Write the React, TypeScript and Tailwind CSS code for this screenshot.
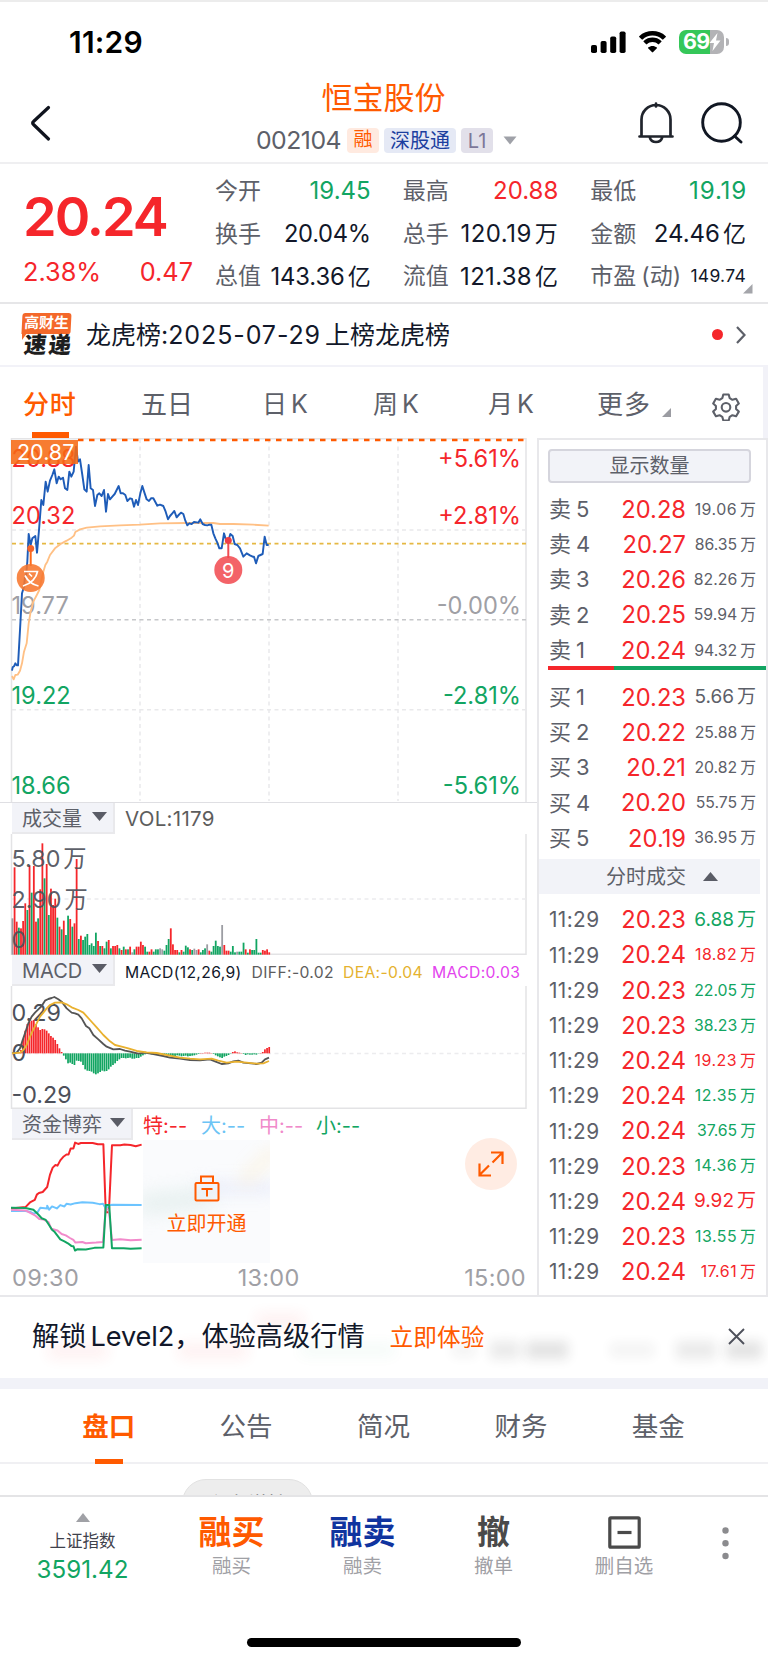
import type { ReactNode } from "react";

type Tone = "r" | "g" | "n";
const barFill: Record<Tone, string> = { r: "#f5262b", g: "#12a562", n: "#9c9da3" };

/* Minute bars: tone followed by the y of the bar's top */
const volume =
  "n385 r232 r395 g413 r415 r393 r340 g360 r226 g308 r228 r395 g385 r298 r160 g265 r222 g375 r296 r345 r326 g383 r410 g418 r392 g435 g377 r387 g410 r400 r207 g447 r437 g450 g440 g432 g465 g460 g468 g428 r453 g468 r468 g475 g455 r450 g475 r468 r468 r465 g475 r480 g470 r478 g478 r470 n487 g478 r470 r470 r455 r465 g470 g485 r485 r478 g485 g478 g478 n475 n478 g482 g465 g447 r415 r463 r480 r480 g487 r480 g485 g467 g472 r478 g480 n476 n480 r478 g487 g480 g475 n463 r482 g485 g468 g452 g468 g470 n405 r465 r482 r482 g485 g468 g487 n485 g485 g485 g458 r478 g488 r478 g480 g480 g447 g488 g488 r480 r482 r478 r487".split(" ");

const macdBars = [
  790, 789, 788, 786, 780, 747, 722, 702, 696, 692, 690, 702, 712, 720, 717, 718, 722, 730, 738, 743, 750, 762, 775, 786,
  797, 808, 820, 818, 822, 825, 812, 813, 815, 825, 838, 842, 843, 845, 850, 853, 850, 846, 842, 844, 843, 838, 830, 825,
  820, 813, 808, 804, 804, 805, 804, 803, 806, 806, 804, 804, 800, 796, 793, 792, 792, 793, 794, 793, 792, 792, 793, 793,
  795, 797, 799, 802, 799, 796, 797, 799, 798, 797, 799, 798, 797, 796, 794, 792, 789, 789, 788, 788, 788, 789, 792, 796,
  799, 802, 804, 800, 798, 795, 791, 786, 784, 787, 788, 789, 792, 795, 793, 794, 794, 793, 794, 791, 789, 786, 778, 774, 771,
];

const priceLine =
  "36,722 38,712 42,709 46,700 50,706 54,706 60,600 66,490 72,470 75,440 78,440 82,395 86,312 92,345 97,325 106,318 111,368 117,300 124,210 130,225 137,155 143,185 150,152 157,135 163,118 170,160 176,140 182,148 189,143 195,175 202,180 208,125 214,140 221,125 228,50 234,95 240,88 247,135 253,178 260,185 266,105 272,175 279,180 285,228 292,195 298,190 305,198 312,180 318,245 324,192 330,208 337,200 344,192 350,180 356,168 362,190 369,190 376,195 382,213 390,205 396,207 402,230 408,210 414,225 421,190 427,168 434,190 440,208 447,213 453,205 460,205 472,227 480,224 490,228 497,245 504,268 510,258 517,250 523,243 530,262 536,255 543,248 550,252 556,272 562,286 568,280 575,282 582,276 595,278 601,268 608,282 615,285 622,286 628,284 634,284 640,310 646,325 652,338 658,355 665,355 672,310 678,330 684,335 691,312 698,318 704,342 712,345 720,355 730,380 740,370 750,376 758,380 762,380 768,400 775,378 788,372 794,320 800,345 806,345";
const averageLine =
  "36,738 41,748 46,735 53,734 60,722 66,700 72,665 80,640 86,580 92,545 100,515 112,492 118,480 124,450 130,425 136,405 142,395 150,375 165,355 185,340 200,332 215,323 222,317 226,306 240,298 260,293 300,289 360,286 420,284 480,280 560,279 640,279 660,282 700,282 760,284 806,287";
const diffLine =
  "36,790 50,788 60,775 68,750 75,730 85,700 95,680 105,668 115,658 125,648 135,632 145,627 155,624 163,621 175,628 185,635 200,655 215,668 225,670 235,674 245,685 258,708 268,715 280,735 295,748 310,762 320,770 340,778 360,777 375,782 390,785 415,791 435,788 460,792 490,798 510,803 540,806 570,810 600,811 630,808 645,814 665,822 685,820 700,814 715,812 730,818 770,822 785,818 795,808 807,803";
const deaLine =
  "36,790 60,788 70,780 80,765 90,740 100,718 110,700 120,680 130,668 140,655 150,645 165,638 185,637 200,643 215,652 235,660 250,668 270,690 290,712 310,735 330,754 345,765 365,770 385,775 410,783 440,787 470,789 500,795 540,803 570,806 600,808 635,806 655,812 680,818 710,815 740,818 770,821 790,820 807,813";

const sells = [["5", "20.28", "19.06"], ["4", "20.27", "86.35"], ["3", "20.26", "82.26"], ["2", "20.25", "59.94"], ["1", "20.24", "94.32"]];
const buys = [["1", "20.23", "5.66"], ["2", "20.22", "25.88"], ["3", "20.21", "20.82"], ["4", "20.20", "55.75"], ["5", "20.19", "36.95"]];
const trades: [string, string, Tone][] = [
  ["20.23", "6.88", "g"], ["20.24", "18.82", "r"], ["20.23", "22.05", "g"], ["20.23", "38.23", "g"], ["20.24", "19.23", "r"], ["20.24", "12.35", "g"],
  ["20.24", "37.65", "g"], ["20.23", "14.36", "g"], ["20.24", "9.92", "r"], ["20.23", "13.55", "g"], ["20.24", "17.61", "r"],
];

function StatusBar() {
  return (
    <div className="flex h-[79px] items-center border-t-2 border-[#ececec] pt-[3px] pr-[39px] pl-[69px]">
      <span className="flex-1 text-[30px] font-semibold tracking-[0.2px] text-black">11:29</span>
      <svg width="35" height="22" viewBox="0 0 35 22" className="mr-[12px]">
        <rect x="0" y="14" width="6" height="8" rx="1.8" />
        <rect x="9.6" y="10" width="6" height="12" rx="1.8" />
        <rect x="19.2" y="5.5" width="6" height="16.500" rx="1.8" />
        <rect x="28.600" y="0.500" width="6" height="21.500" rx="1.8" />
      </svg>
      <svg width="29" height="22" viewBox="0 0 29 22" className="mr-[12px]">
        <path d="M14.500 4.600c3.800 0 7.300 1.500 9.900 4 .2.200.5.200.7 0l2.700-2.700c.2-.2.200-.5 0-.7-7.300-6.800-19.300-6.800-26.600 0-.2.200-.2.500 0 .7l2.700 2.700c.2.200.5.200.7 0 2.600-2.500 6.100-4 9.900-4z" />
        <path d="M14.500 11.100c2.100 0 4.100.8 5.600 2.200.2.200.5.200.7 0l2.600-2.600c.2-.2.200-.5 0-.7-5-4.600-12.800-4.600-17.800 0-.2.200-.2.500 0 .7l2.600 2.600c.2.200.5.200.7 0 1.500-1.400 3.500-2.200 5.600-2.200z" />
        <path d="M18.900 15.500c.2-.2.200-.5 0-.7-2.500-2.100-6.300-2.100-8.800 0-.2.200-.2.500 0 .7l4 4c.2.200.6.200.8 0z" transform="translate(0 1.800)" />
      </svg>
      <div className="flex items-center gap-[2px]">
        <div className="flex h-[24px] w-[45px] items-center rounded-[7px] bg-[linear-gradient(90deg,#35c759_31px,#b3b3b6_31px)] pl-[4px]">
          <span className="text-[21.500px] font-bold leading-none tracking-[-0.8px] text-white">69</span>
          <svg width="12" height="18" viewBox="0 0 12 18" fill="#fff"><path d="M8.500 0 0.500 10h4.500L3.500 18l8-10.500H7z" /></svg>
        </div>
        <div className="h-[8px] w-[3px] rounded-r-full bg-[#b3b3b6]" />
      </div>
    </div>
  );
}

function Header() {
  return (
    <header className="flex h-[85px] items-center border-b-2 border-[#efeff1] pr-[25px] pl-[29px]">
      <svg width="100" height="38" viewBox="0 0 100 38" fill="none" stroke="#10141e" strokeWidth="3.200" strokeLinecap="round" strokeLinejoin="round" className="mt-[4px]">
        <path d="M19.500 3.500 4.500 17.500q-1.700 1.500 0 3L19.500 35" />
      </svg>
      <div className="flex flex-1 flex-col items-center">
        <h1 className="-mt-[3px] h-[43px] text-[31px] leading-[36px] text-[#ff5a00]">恒宝股份</h1>
        <div className="flex h-[36px] items-center pl-[6px] text-[21px]">
          <span className="mr-[6px] text-[24.800px] tracking-[-0.5px] text-[#5d6069]">002104</span>
          <span className="mr-[5px] flex h-[25px] w-[32px] items-center justify-center rounded-[4px] bg-[#ffeae0] text-[19px] text-[#ff5a00]">融</span>
          <span className="mr-[5px] flex h-[25px] w-[72px] items-center justify-center rounded-[4px] bg-[#e5e9f5] text-[20px] text-[#1c3f9f]">深股通</span>
          <span className="mr-[10px] flex h-[25px] w-[32px] items-center justify-center rounded-[4px] bg-[#e2e0ea] text-[20px] text-[#7c7799]">L1</span>
          <svg width="14" height="9"><path d="M0.500 0.500h13L7 8.500z" fill="#9fa1a8" /></svg>
        </div>
      </div>
      <svg width="36" height="42" viewBox="0 0 36 42" fill="none" stroke="#20242c" strokeWidth="2.700" strokeLinecap="round" className="mr-[27px] mt-[4px]">
        <path d="M3.500 33V17.500a14.500 14.500 0 0 1 29 0V33M1.500 34.500h33M18 1.500v3M11.800 35.500c1.500 6 10.900 6 12.400 0" />
      </svg>
      <svg width="42" height="42" viewBox="0 0 42 42" fill="none" stroke="#111723" strokeWidth="2.900" strokeLinecap="round" className="mt-[4px]">
        <circle cx="20.500" cy="20.500" r="18.800" /><path d="m33.500 34 6.500 6" />
      </svg>
    </header>
  );
}

function Stat({ label, value, unit, tone = "text-[#12182a]", size = "text-[23.800px] tracking-[-0.1px]" }: { label: ReactNode; value: string; unit?: string; tone?: string; size?: string }) {
  return (
    <div className="flex h-[42.500px] items-center justify-between whitespace-nowrap">
      <span className="-ml-px text-[23px] text-[#5d6069]">{label}</span>
      <span className={`${size} ${tone}`}>
        {value}{unit && <span className="ml-[3px] text-[23px]">{unit}</span>}
      </span>
    </div>
  );
}

function Quote() {
  return (
    <section className="relative flex h-[140px] border-b-2 border-[#e6e6e8] pt-[6px] pl-[23px] text-[#f5262b]">
      <div className="w-[193px]">
        <div className="mt-[11px] h-[72px] text-[54px] leading-[71px] font-semibold tracking-[-2px]">20.24</div>
        <div className="flex w-[170px] justify-between text-[25.300px] leading-[38px]"><span>2.38%</span><span>0.47</span></div>
      </div>
      <div className="grid h-[128px] w-[530px] grid-cols-3 gap-x-[33px]">
        <Stat label="今开" value="19.45" tone="text-[#12a562]" size="text-[24px]" />
        <Stat label="最高" value="20.88" tone="text-[#f5262b]" size="text-[24px]" />
        <Stat label="最低" value="19.19" tone="text-[#12a562]" size="text-[24.200px] tracking-[0.800px] -mr-[1px]" />
        <Stat label="换手" value="20.04%" size="text-[23.700px] tracking-[-0.300px]" />
        <Stat label="总手" value="120.19" unit="万" size="text-[24px] tracking-[0.500px]" />
        <Stat label="金额" value="24.46" unit="亿" size="text-[24px]" />
        <Stat label="总值" value="143.36" unit="亿" />
        <Stat label="流值" value="121.38" unit="亿" size="text-[24px] tracking-[0.3px]" />
        <Stat label={<>市盈<span className="ml-[5px]">(动)</span></>} value="149.74" size="text-[17.500px] tracking-[0.3px]" />
      </div>
      <svg width="10" height="10" className="absolute right-[15px] bottom-[8px]"><path d="M9.500 0v9.500H0z" fill="#a4a5aa" /></svg>
    </section>
  );
}

function News() {
  return (
    <section className="flex h-[63px] items-center border-b-2 border-[#f2f2f8] pr-[22px] pl-[22px]">
      <div className="relative mr-[15px] w-[49px] text-center leading-none">
        <div className="flex h-[21px] -skew-x-3 justify-center rounded-t-[3px] rounded-br-[2px] bg-[#f4682a] text-[14.800px] leading-[20px] font-bold text-white">高财生</div>
        <svg width="5" height="7" className="absolute top-[20px] left-0"><path d="M0 0h5L0 7z" fill="#f4682a" /></svg>
        <div className="flex h-[22px] -skew-x-6 justify-between pl-[2px] text-[22.500px] leading-[22px] font-black text-[#1e1e1e]"><span>速</span><span>递</span></div>
      </div>
      <p className="flex-1 text-[25px] leading-[34px] text-[#12182a]">龙虎榜:<span className="tracking-[0.900px]">2025-07-29</span><span className="ml-[4px]">上榜龙虎榜</span></p>
      <i className="mr-[13px] size-[11px] rounded-full bg-[#f5262b]" />
      <svg width="10" height="18" viewBox="0 0 10 18" fill="none" stroke="#5d6069" strokeWidth="2.200"><path d="m1 1 7.500 8L1 17" /></svg>
    </section>
  );
}

function PeriodTabs() {
  return (
    <nav className="flex h-[71px] border-r-[5px] border-[#f2f2f8] pl-[23px] text-[25px] leading-[75px] text-[#5d6069]">
      <div className="relative w-[118px] text-[26px] font-medium tracking-[0.800px] text-[#ff5a00]">分时<i className="absolute top-[65px] left-[9px] h-[6px] w-[37px] bg-[#ff5a00]" /></div>
      <div className="w-[121px] text-[26px]">五日</div>
      <div className="w-[111px]">日<span className="ml-[4px]">K</span></div>
      <div className="w-[115px]">周<span className="ml-[4px]">K</span></div>
      <div className="w-[109px]">月<span className="ml-[4px]">K</span></div>
      <div className="flex w-[115px] text-[26px] tracking-[1px]">更多<svg width="9" height="9" className="mt-[41px] ml-[11px]"><path d="M9 0v9H0z" fill="#9b9ca2" /></svg></div>
      <svg width="28" height="28" viewBox="0 0 28 28" fill="none" stroke="#5d6069" strokeWidth="2.100" strokeLinejoin="round" className="mt-[26px]">
        <path d="M11.300 1.500h5.400l1 3.700 2.700 1.600 3.700-1 2.700 4.700-2.700 2.500v2.900l2.700 2.700-2.700 4.600-3.700-1-2.700 1.600-1 3.700h-5.400l-1-3.700-2.700-1.600-3.700 1-2.700-4.600 2.700-2.700v-2.900L1.200 10.500l2.700-4.700 3.700 1 2.700-1.600z" />
        <circle cx="14" cy="14.300" r="4.300" />
      </svg>
    </nav>
  );
}

function PriceChart() {
  return (
    <svg width="537" height="364" viewBox="0 438 537 364" fontSize="23.600" className="block">
      <g fill="none" stroke="#e9e9eb" strokeWidth="1.500">
        <path d="M11.500 802V438.700H526V802" stroke="#e4e4e6" />
        <path d="M140 439v362M269 439v362M398 439v362M12 530h514M12 709.700h514" strokeDasharray="4 3.500" />
        <path d="M12 619.700h514" stroke="#c6c7ca" strokeDasharray="4 3.500" />
        <path d="M12 543.700h514" stroke="#e5b843" strokeWidth="1.800" strokeDasharray="4 3.500" />
        <path d="M78 440h448" stroke="#ff5a00" strokeWidth="2.700" strokeDasharray="5.500 5.500" />
      </g>
      <text x="11.500" y="467" fill="#f5262b">20.88</text>
      <text x="11.500" y="523.500" fill="#f5262b">20.32</text>
      <text x="11.500" y="613.500" fill="#9fa0a5">19.77</text>
      <text x="11.500" y="703.500" fill="#12a562">19.22</text>
      <text x="11.500" y="793.500" fill="#12a562">18.66</text>
      <g textAnchor="end">
        <text x="521" y="467" fill="#f5262b">+5.61%</text>
        <text x="521" y="523.500" fill="#f5262b">+2.81%</text>
        <text x="521" y="613.500" fill="#9fa0a5">-0.00%</text>
        <text x="521" y="703.500" fill="#12a562">-2.81%</text>
        <text x="521" y="793.500" fill="#12a562">-5.61%</text>
      </g>
      <g transform="translate(0 430) scale(.33333)" fill="none" strokeLinejoin="round">
        <polyline points={averageLine} stroke="#ffc085" strokeWidth="5.500" />
        <polyline points={priceLine} stroke="#1e5cb8" strokeWidth="5.800" />
      </g>
      <rect x="11" y="440" width="67" height="24" fill="#f66a14" opacity=".88" />
      <text x="17" y="460" fill="#fff" fontSize="21.500">20.87</text>
      <path d="M30.700 548v18" stroke="#ff6a1a" strokeWidth="2" />
      <circle cx="30.700" cy="548.500" r="3.500" fill="#f4642a" />
      <circle cx="30.700" cy="578" r="14" fill="#f7762d" opacity=".88" />
      <path d="M24 571.500h13.500c-1 6-6 12-14.500 14.500M25 575.500c2.500 5 6.500 9 13.500 10.500M29 573.500l3 3" stroke="#fff" strokeWidth="1.700" fill="none" />
      <path d="M228.300 540v18" stroke="#f04b52" strokeWidth="2" />
      <circle cx="228.300" cy="540.500" r="3.500" fill="#ee3e47" />
      <circle cx="228.300" cy="570" r="14" fill="#f1494f" opacity=".86" />
      <text x="228.300" y="577.500" textAnchor="middle" fill="#fff" fontSize="20">9</text>
    </svg>
  );
}

function Picker({ label, width }: { label: string; width: string }) {
  return (
    <div className={`ml-[12px] flex h-[31px] shrink-0 items-center justify-between border-r-2 border-b-2 border-[#e9e9ec] bg-[#f2f3f8] pt-[2px] pr-[6px] pl-[10px] text-[20px] leading-[28px] text-[#5d6069] ${width}`}>
      <span className="whitespace-nowrap">{label}</span>
      <svg width="15" height="9" className="-mt-[4px]"><path d="M0 0h15L7.500 9z" fill="#5a5c66" /></svg>
    </div>
  );
}

function VolumePanel() {
  return (
    <section>
      <div className="flex h-[32px] items-center border-t border-[#dfdfe3]">
        <Picker label="成交量" width="w-[103px]" />
        <span className="ml-[10px] pt-px text-[20.500px] leading-[30px] tracking-[0.3px] text-[#5d5d5d]">VOL:1179</span>
      </div>
      <svg width="537" height="121" viewBox="0 834 537 121" fontSize="23.300" fill="#4d505a" className="block">
        <path d="M11.500 833v122M526 833v122M11 954.300h515" stroke="#e3e3e5" strokeWidth="1.500" />
        <path d="M12 899h514" stroke="#ececee" strokeWidth="1.500" strokeDasharray="4 3.500" />
        <g transform="translate(0 790) scale(.33333)">
          {volume.map((bar, i) => {
            const top = Number(bar.slice(1));
            return <rect key={i} x={34.6 + i * 6.42} y={top} width="5.400" height={494 - top} fill={barFill[bar[0] as Tone]} />;
          })}
        </g>
        <g fillOpacity=".92">
          <text x="11.500" y="867">5.80<tspan dx="3">万</tspan></text>
          <text x="11.500" y="907.500">2.90<tspan dx="3">万</tspan></text>
          <text x="11.500" y="948">0</text>
        </g>
      </svg>
    </section>
  );
}

function MacdPanel() {
  return (
    <section>
      <div className="flex h-[31px] items-center whitespace-nowrap text-[15.700px]">
        <Picker label="MACD" width="w-[103px]" />
        <div className="flex pt-[4px] leading-[27px]">
          <span className="ml-[10px] tracking-[0.35px] text-[#12182a]">MACD(12,26,9)</span>
          <span className="ml-[10px] tracking-[0.35px] text-[#5d5d5d]">DIFF:-0.02</span>
          <span className="ml-[9px] tracking-[0.35px] text-[#e5b22f]">DEA:-0.04</span>
          <span className="ml-[9px] tracking-[0.35px] text-[#e344ee]">MACD:0.03</span>
        </div>
      </div>
      <svg width="537" height="123" viewBox="0 986 537 123" fontSize="23.300" fill="#4d505a" className="block">
        <path d="M11.500 986v123M526 986v123M11 1108.300h515" stroke="#e3e3e5" strokeWidth="1.500" />
        <path d="M12 1053.500h514" stroke="#ececee" strokeWidth="1.500" strokeDasharray="4 3.500" />
        <g transform="translate(0 790) scale(.33333)">
          {macdBars.map((y, i) => (
            <rect key={i} x={34.6 + i * 6.42} y={Math.min(y, 790)} width="5.200" height={Math.abs(790 - y)} fill={y < 790 ? "#f5262b" : "#12a562"} />
          ))}
        </g>
        <text x="11.500" y="1020.500">0.29</text>
        <text x="11.500" y="1061">0</text>
        <text x="11.500" y="1102.500">-0.29</text>
        <g transform="translate(0 790) scale(.33333)" fill="none" strokeLinejoin="round" strokeWidth="5.500">
          <polyline points={diffLine} stroke="#555" />
          <polyline points={deaLine} stroke="#e9b12f" />
        </g>
      </svg>
    </section>
  );
}

function FundPanel() {
  return (
    <section className="h-[186px]">
      <div className="flex h-[31px] items-center whitespace-nowrap text-[20px]">
        <Picker label="资金博弈" width="w-[121px]" />
        <div className="flex pt-[4px] leading-[27px]">
          <span className="ml-[10px] w-[58px] text-[#f5262b]">特:--</span>
          <span className="w-[58px] text-[#6cc4f5]">大:--</span>
          <span className="w-[57px] text-[#f08aca]">中:--</span>
          <span className="text-[#12a562]">小:--</span>
        </div>
      </div>
      <div className="flex h-[123px] pl-[11px]">
        <svg width="132" height="123" viewBox="33 122 383 374" preserveAspectRatio="none" fill="none" strokeWidth="2" strokeLinejoin="round">
          <g className="[&>*]:[vector-effect:non-scaling-stroke]">
            <polyline stroke="#f5262b" points="33,330 75,326 88,312 102,304 108,288 114,283 125,280 138,265 146,228 154,206 162,198 168,200 176,184 186,172 194,166 200,166 206,148 214,148 219,130 228,134 236,131 270,131 285,135 301,135 308,342 317,342 326,138 350,138 362,136 380,137 395,141 412,136" />
            <polyline stroke="#6cc4ff" points="33,338 75,338 88,340 98,346 110,342 118,328 138,330 138,322 144,334 152,324 166,330 176,320 188,324 194,316 206,318 220,314 240,311 270,313 290,317 300,316 308,330 318,320 330,319 412,320" />
            <polyline stroke="#f28acb" points="33,334 75,336 90,344 104,352 115,362 128,364 142,372 150,392 168,397 180,408 192,412 204,420 214,426 220,434 240,432 250,436 280,434 300,432 308,330 317,335 326,426 350,424 380,427 412,425" />
            <polyline stroke="#12a562" points="33,328 75,329 98,334 108,344 122,360 134,365 142,378 152,395 160,402 176,424 188,430 198,436 208,444 214,445 219,458 226,454 250,455 275,450 301,449 308,320 318,320 326,451 360,451 380,453 412,451" />
          </g>
        </svg>
        <div className="relative flex w-[127px] flex-col items-center overflow-hidden bg-[#fafbfd] pt-[35px] text-[#ff5a00]">
          <i className="absolute -left-[8px] top-[52px] h-[18px] w-[80px] -rotate-6 rounded-full bg-[#d5e6e3] opacity-60 blur-[10px]" />
          <i className="absolute left-[55px] top-[42px] h-[12px] w-[80px] rounded-full bg-[#dfe4f8] opacity-60 blur-[8px]" />
          <i className="absolute left-[90px] top-[20px] h-[12px] w-[52px] -rotate-45 rounded-full bg-[#fbf0d8] opacity-60 blur-[8px]" />
          <svg width="26" height="27" viewBox="0 0 26 27" fill="none" stroke="#ff5a00" strokeWidth="2" className="relative">
            <rect x="1.500" y="8" width="23" height="17.500" rx="1" /><path d="M7 8V1.500h12V8M7.500 14h11M13 14v7.500" />
          </svg>
          <span className="relative mt-[7px] text-[20px] leading-[30px]">立即开通</span>
        </div>
        <div className="-mt-[2px] ml-[195px] flex size-[52px] items-center justify-center rounded-full bg-[#ffece3]">
          <svg width="26" height="26" viewBox="0 0 26 26" fill="none" stroke="#ff5a00" strokeWidth="2.200"><path d="M13 1.500h11.500V13M24 2 14.500 11.500M11 14.500 2 23.500M1.500 12.500V24.500H13" /></svg>
        </div>
      </div>
      <div className="flex h-[29px] justify-between pr-[11px] pl-[12px] text-[23.500px] leading-[29px] tracking-[0.3px] text-[#9fa0a5]">
        <span>09:30</span><span className="pr-[6px]">13:00</span><span>15:00</span>
      </div>
    </section>
  );
}

function Row({ name, price, amount, tone, time }: { name: ReactNode; price: string; amount: string; tone: string; time?: boolean }) {
  return (
    <div className="flex h-[35.200px] items-center whitespace-nowrap pr-[10px] pl-[10px] text-[#5d6069]">
      <span className={time ? "w-[60px] text-[20.800px] tracking-[0.4px]" : "w-[60px] text-[22px]"}>{name}</span>
      <span className="w-[77px] text-right text-[23.700px] text-[#f5262b]">{price}</span>
      <span className={`flex-1 text-right ${tone} ${amount.length < 5 ? "text-[19px]" : amount.startsWith("1") ? "text-[15.900px] tracking-[0.500px]" : "text-[15.800px]"}`}>{amount}<span className="ml-[3px] tracking-normal">万</span></span>
    </div>
  );
}

function OrderBook() {
  return (
    <aside className="h-[857px] w-[231px] border-t-2 border-r-2 border-l-2 border-[#e8e8eb]">
      <div className="mt-[9px] ml-[9px] flex h-[34px] w-[203px] items-center justify-center rounded-[4px] border-2 border-[#d5d5dd] bg-[#f2f3f8] text-[20px] text-[#5d6069]">显示数量</div>
      <div className="mt-[9px]">{sells.map(([n, p, a]) => <Row key={n} name={<>卖<span className="ml-[5px]">{n}</span></>} price={p} amount={a} tone="text-[#5d6069]" />)}</div>
      <div className="mt-[-2px] ml-[9px] flex h-[4px]"><i className="w-[66px] bg-[#f5262b]" /><i className="flex-1 bg-[#12a562]" /></div>
      <div className="mt-[10px]">{buys.map(([n, p, a]) => <Row key={n} name={<>买<span className="ml-[5px]">{n}</span></>} price={p} amount={a} tone="text-[#5d6069]" />)}</div>
      <div className="mt-[3px] mr-[6px] flex h-[35px] items-center justify-center gap-[17px] bg-[#f2f3f8] pt-px pl-[25px] text-[20px] text-[#5d6069]">
        分时成交<svg width="15" height="9"><path d="M0 9h15L7.500 0z" fill="#5a5c66" /></svg>
      </div>
      <div className="mt-[8.500px]">{trades.map(([p, a, t], i) => <Row key={i} time name="11:29" price={p} amount={a} tone={t === "g" ? "text-[#12a562]" : "text-[#f5262b]"} />)}</div>
    </aside>
  );
}

function Banner() {
  return (
    <section className="relative flex h-[83px] items-center overflow-hidden border-t-2 border-[#e8e8eb] pr-[23px] pl-[32px]">
      <i className="absolute top-[46px] left-[48px] h-[16px] w-[60px] bg-[#f5262b] opacity-[0.06] blur-[7px]" />
      <i className="absolute top-[46px] left-[178px] h-[16px] w-[70px] bg-[#f5262b] opacity-[0.06] blur-[7px]" />
      <i className="absolute top-[16px] left-[256px] h-[16px] w-[48px] bg-[#f5262b] opacity-[0.06] blur-[7px]" />
      <i className="absolute top-[46px] left-[300px] h-[14px] w-[95px] bg-[#12a562] opacity-[0.04] blur-[7px]" />
      <i className="absolute top-[46px] left-[452px] h-[14px] w-[24px] bg-[#222] opacity-[0.05] blur-[6px]" />
      <i className="absolute top-[44px] left-[490px] h-[18px] w-[30px] bg-[#222] opacity-[0.09] blur-[6px]" />
      <i className="absolute top-[44px] left-[526px] h-[18px] w-[42px] bg-[#222] opacity-[0.12] blur-[6px]" />
      <i className="absolute top-[46px] left-[610px] h-[14px] w-[44px] bg-[#222] opacity-[0.05] blur-[6px]" />
      <i className="absolute top-[44px] left-[676px] h-[18px] w-[40px] bg-[#222] opacity-[0.09] blur-[6px]" />
      <i className="absolute top-[44px] left-[726px] h-[18px] w-[36px] bg-[#222] opacity-[0.12] blur-[6px]" />
      <p className="relative text-[27.200px] text-[#12182a]">解锁<span className="ml-[4px] tracking-[-0.1px]">Level2</span>，体验高级行情</p>
      <span className="relative ml-[25px] flex-1 text-[23.700px] text-[#ff5a00]">立即体验</span>
      <svg width="17" height="17" viewBox="0 0 17 17" stroke="#4e515b" strokeWidth="1.900" className="relative -mt-[2px]"><path d="m1 1 15 15M16 1 1 16" /></svg>
    </section>
  );
}

function InfoTabs() {
  return (
    <>
      <nav className="grid h-[75px] grid-cols-5 border-b-2 border-[#f0f0f3] pr-[41px] pl-[40px] text-center text-[26.500px] leading-[75px] text-[#5d6069]">
        <div className="relative font-bold text-[#ff5a00]">盘口<i className="absolute bottom-0 left-[55px] h-[5px] w-[28px] bg-[#ff5a00]" /></div>
        <div>公告</div><div>简况</div><div>财务</div><div>基金</div>
      </nav>
      <div className="h-[31px] overflow-hidden pt-[15px] pl-[182px]">
        <div className="h-[52px] w-[131px] rounded-[24px] border border-[#e2e2e2] bg-[#ededed] text-center text-[20px] leading-[51px] text-[#555]">主力增持</div>
      </div>
    </>
  );
}

function Action({ icon, label, width }: { icon: ReactNode; label: string; width: string }) {
  return (
    <div className={`flex flex-col items-center pt-[16px] ${width}`}>
      <div className="flex h-[38px] items-center justify-center text-[33px] leading-[38px] font-bold">{icon}</div>
      <span className="text-[19.500px] leading-[31px] text-[#9fa0a5]">{label}</span>
    </div>
  );
}

function BottomBar() {
  return (
    <footer className="border-t-2 border-[#e4e4e6]">
      <div className="flex h-[141px] pl-[20px]">
        <div className="flex w-[125px] flex-col items-center pt-[16px]">
          <svg width="14" height="9"><path d="M0 9h14L7 0z" fill="#a0a1a6" /></svg>
          <span className="mt-[6px] text-[16.500px] leading-[26px] text-[#3f424c]">上证指数</span>
          <span className="text-[24.200px] leading-[31px] text-[#12a562]">3591.42</span>
        </div>
        <Action width="ml-[21px] w-[131px]" icon={<span className="text-[#ff5a00]">融买</span>} label="融买" />
        <Action width="w-[131px]" icon={<span className="text-[#10349f]">融卖</span>} label="融卖" />
        <Action width="w-[131px]" icon={<span className="text-[#4a4a4a]">撤</span>} label="撤单" />
        <Action width="w-[130px]" label="删自选" icon={
          <svg width="33" height="33" viewBox="0 0 33 33" fill="none" stroke="#4a4a4a" strokeWidth="3.200"><rect x="1.800" y="1.800" width="29.400" height="29.400" rx="1" /><path d="M9.500 16.500h14" /></svg>
        } />
        <svg width="7" height="34" className="ml-[33px] mt-[29px]" fill="#8b8b8e"><circle cx="3.500" cy="4.500" r="3.200" /><circle cx="3.500" cy="17.200" r="3.200" /><circle cx="3.500" cy="30" r="3.200" /></svg>
      </div>
      <div className="mx-auto h-[9px] w-[274px] rounded-full bg-black" />
    </footer>
  );
}

export default function App() {
  return (
    <main className="h-[1663px] w-[768px] overflow-hidden bg-white font-['Inter','Noto_Sans_CJK_SC',sans-serif]">
      <StatusBar />
      <Header />
      <Quote />
      <News />
      <PeriodTabs />
      <div className="flex h-[857px]">
        <div className="w-[537px]">
          <PriceChart />
          <VolumePanel />
          <MacdPanel />
          <FundPanel />
        </div>
        <OrderBook />
      </div>
      <Banner />
      <div className="h-[11px] bg-[#f1f2f8]" />
      <InfoTabs />
      <BottomBar />
    </main>
  );
}
